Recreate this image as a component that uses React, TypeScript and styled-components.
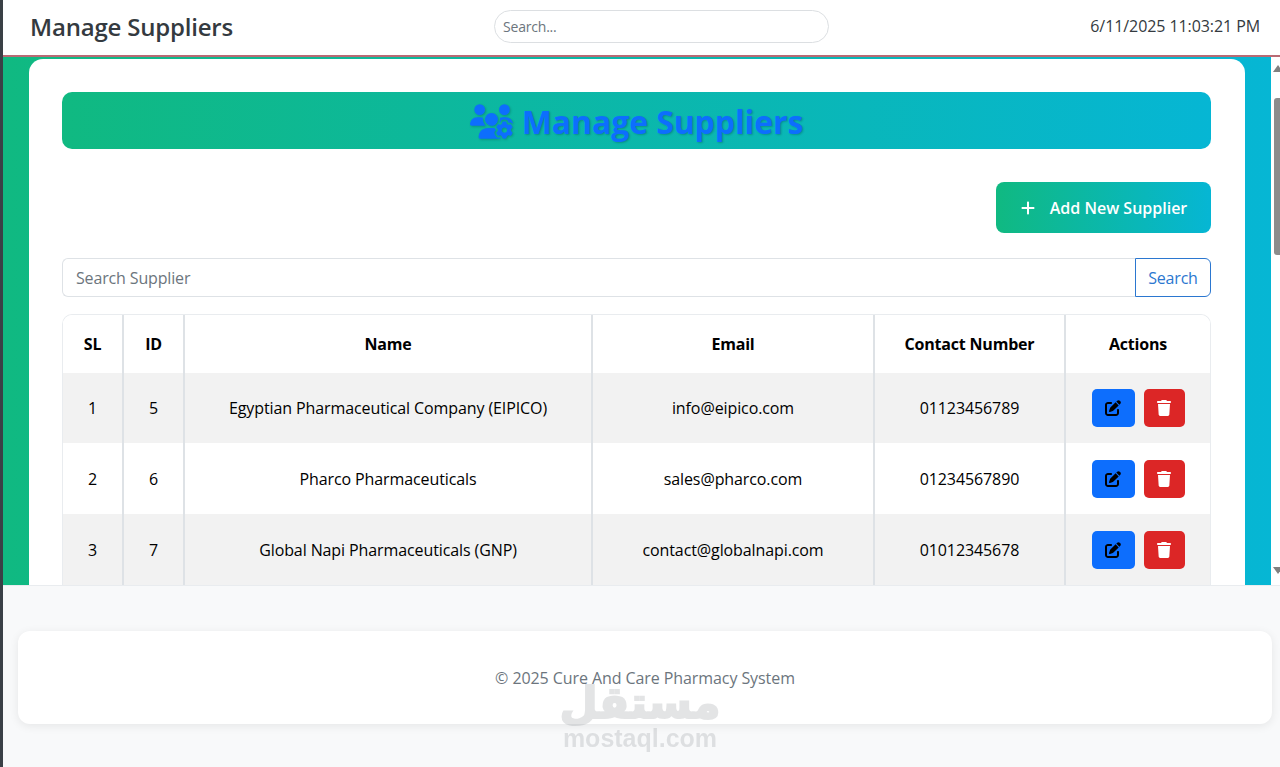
import styled, { createGlobalStyle } from "styled-components";
import { FaPenToSquare, FaPlus, FaTrash, FaUsersGear } from "react-icons/fa6";

const GlobalStyle = createGlobalStyle`
    * {
        box-sizing: border-box;
    }
    html, body {
        margin: 0;
        height: 767px;
        overflow: hidden;
        background: #f8f9fa;
        font-family: "Open Sans", "Noto Sans", "Liberation Sans", sans-serif;
        color: #000;
    }
`;

const Page = styled.div`
    position: relative;
    height: 767px;
    display: flex;
    flex-direction: column;
    border-left: 3px solid #3a4046;
`;

const Head = styled.header`
    height: 57px;
    flex: none;
    display: grid;
    grid-template-columns: 464px 335px 1fr;
    align-items: center;
    padding: 0 20px 3px 27px;
    background: #fff;
    border-bottom: 2px solid #b86a74;
`;

const HeadTitle = styled.h1`
    margin: 0;
    font-size: 24px;
    font-weight: 600;
    letter-spacing: -0.2px;
    color: #343a40;
`;

const HeadSearch = styled.input`
    width: 335px;
    height: 33px;
    padding: 0 8px;
    border: 1px solid #dcdfe2;
    border-radius: 17px;
    font: inherit;
    font-size: 14px;
    letter-spacing: -0.2px;
    outline: none;
    &::placeholder {
        color: #6c757d;
    }
`;

const Clock = styled.div`
    justify-self: end;
    font-size: 16px;
    letter-spacing: -0.08px;
    color: #343a40;
`;

const Body = styled.div`
    height: 528px;
    flex: none;
    display: flex;
`;

const Main = styled.main`
    flex: 1;
    min-width: 0;
    overflow: hidden;
    padding: 2px 26px 0;
    background: linear-gradient(90deg, #10b981, #06b6d4);
`;

const Card = styled.section`
    height: 600px;
    padding: 33px 34px 0 33px;
    background: #fff;
    border-radius: 14px;
`;

const Banner = styled.div`
    height: 57px;
    display: flex;
    align-items: center;
    justify-content: center;
    gap: 9px;
    padding-top: 1px;
    border-radius: 10px;
    background: linear-gradient(90deg, #10b981, #06b6d4);
    color: #0d6efd;
    font-size: 32px;
    font-weight: 700;
    letter-spacing: -0.1px;
    text-shadow: 1px 1px 2px rgba(0, 0, 0, 0.2);
    svg {
        filter: drop-shadow(1px 1px 1px rgba(0, 0, 0, 0.2));
    }
`;

const ActionRow = styled.div`
    display: flex;
    justify-content: flex-end;
    margin: 33px 0 25px;
`;

const AddButton = styled.button`
    width: 215px;
    height: 51px;
    display: flex;
    align-items: center;
    justify-content: center;
    gap: 14px;
    border: 0;
    border-radius: 8px;
    background: linear-gradient(90deg, #10b981, #06b6d4);
    color: #fff;
    font: inherit;
    font-size: 16px;
    font-weight: 600;
`;

const SearchGroup = styled.div`
    display: flex;
    height: 39px;
    margin-bottom: 17px;
`;

const SearchInput = styled.input`
    flex: 1;
    min-width: 0;
    padding: 0 13px;
    border: 1px solid #dee2e6;
    border-right: 0;
    border-radius: 6px 0 0 6px;
    font: inherit;
    font-size: 16px;
    letter-spacing: -0.15px;
    outline: none;
    &::placeholder {
        color: #6c757d;
    }
`;

const SearchButton = styled.button`
    width: 76px;
    border: 1px solid #2b77d0;
    border-radius: 0 6px 6px 0;
    background: #fff;
    color: #2b77d0;
    font: inherit;
    font-size: 16px;
    letter-spacing: -0.2px;
`;

const TableWrap = styled.div`
    overflow: hidden;
    border-radius: 10px 10px 0 0;
    border: 1px solid #e9ecef;
    border-width: 1px 1px 0 1px;
`;

const Table = styled.table`
    width: 100%;
    table-layout: fixed;
    border-collapse: collapse;
    font-size: 16px;
    letter-spacing: -0.1px;
    text-align: center;
`;

const Th = styled.th`
    height: 58px;
    padding: 0;
    font-weight: 700;
    letter-spacing: -0.2px;
    background: #fff;
    border-right: 2px solid #dee2e6;
    &:last-child {
        border-right: 0;
    }
`;

const Row = styled.tr<{ $striped: boolean }>`
    height: 71px;
    background: ${props => (props.$striped ? "#f2f2f2" : "#fff")};
    &:first-child {
        height: 70px;
    }
`;

const Td = styled.td`
    padding: 0;
    border-right: 2px solid #dee2e6;
    &:last-child {
        border-right: 0;
    }
`;

const Actions = styled.div`
    display: flex;
    justify-content: center;
    gap: 9px;
`;

const IconButton = styled.button<{ $kind: "edit" | "del" }>`
    width: ${props => (props.$kind === "edit" ? "43px" : "41px")};
    height: 38px;
    display: flex;
    align-items: center;
    justify-content: center;
    padding: 0;
    border: 0;
    border-radius: 5px;
    font-size: 16px;
    background: ${props => (props.$kind === "edit" ? "#0d6efd" : "#dc2626")};
    color: ${props => (props.$kind === "edit" ? "#000" : "#fff")};
`;

const ScrollRail = styled.div`
    width: 9px;
    flex: none;
    overflow: hidden;
    display: flex;
    flex-direction: column;
    padding: 8px 0 0 2px;
    background: #fff;
`;

const Arrow = styled.div<{ $down?: boolean }>`
    width: 10px;
    height: 7px;
    flex: none;
    background: #808080;
    clip-path: ${props =>
        props.$down ? "polygon(0 0, 100% 0, 50% 100%)" : "polygon(50% 0, 100% 100%, 0 100%)"};
    margin-top: ${props => (props.$down ? "312px" : "0")};
`;

const Thumb = styled.div`
    width: 6px;
    height: 157px;
    flex: none;
    margin: 26px 0 0 1px;
    border-radius: 3px 0 0 3px;
    background: #8c8c8c;
`;

const FooterArea = styled.div`
    flex: 1;
    padding: 45px 8px 43px 15px;
    background: #f8f9fa;
    border-top: 1px solid #e9ecef;
`;

const FooterCard = styled.footer`
    height: 93px;
    display: flex;
    align-items: center;
    justify-content: center;
    border-radius: 12px;
    background: #fff;
    box-shadow: 0 2px 10px rgba(0, 0, 0, 0.08);
    font-size: 16px;
    letter-spacing: -0.08px;
    color: #6c757d;
`;

// 워터마크: 페이지 위에 겹쳐지는 로고
const Watermark = styled.div`
    position: absolute;
    left: 557px;
    top: 681px;
    width: 160px;
    display: flex;
    flex-direction: column;
    align-items: center;
    color: #777c82;
    opacity: 0.2;
    pointer-events: none;
`;

const WatermarkArabic = styled.div`
    height: 44px;
    font-family: "DejaVu Sans", sans-serif;
    font-size: 44px;
    font-weight: 700;
    line-height: 44px;
    -webkit-text-stroke: 2px #777c82;
`;

const WatermarkLatin = styled.div`
    font-family: "Liberation Sans", sans-serif;
    font-size: 25px;
    font-weight: 700;
    line-height: 26px;
`;

const columns = [60, 61, 408, 282, 191, 145];
const headers = ["SL", "ID", "Name", "Email", "Contact Number", "Actions"];
const suppliers = [
    { sl: 1, id: 5, name: "Egyptian Pharmaceutical Company (EIPICO)", email: "info@eipico.com", phone: "01123456789" },
    { sl: 2, id: 6, name: "Pharco Pharmaceuticals", email: "sales@pharco.com", phone: "01234567890" },
    { sl: 3, id: 7, name: "Global Napi Pharmaceuticals (GNP)", email: "contact@globalnapi.com", phone: "01012345678" },
];

function App() {
    return (
        <>
            <GlobalStyle />
            <Page>
                <Head>
                    <HeadTitle>Manage Suppliers</HeadTitle>
                    <HeadSearch placeholder="Search..." />
                    <Clock>6/11/2025 11:03:21 PM</Clock>
                </Head>
                <Body>
                    <Main>
                        <Card>
                            <Banner>
                                <FaUsersGear size={43} />
                                Manage Suppliers
                            </Banner>
                            <ActionRow>
                                <AddButton>
                                    <FaPlus size={16} />
                                    Add New Supplier
                                </AddButton>
                            </ActionRow>
                            <SearchGroup>
                                <SearchInput placeholder="Search Supplier" />
                                <SearchButton>Search</SearchButton>
                            </SearchGroup>
                            <TableWrap>
                                <Table>
                                    <colgroup>
                                        {columns.map((width, index) => (
                                            <col key={index} style={{ width }} />
                                        ))}
                                    </colgroup>
                                    <thead>
                                        <tr>
                                            {headers.map(header => (
                                                <Th key={header}>{header}</Th>
                                            ))}
                                        </tr>
                                    </thead>
                                    <tbody>
                                        {suppliers.map((item, index) => (
                                            <Row key={item.id} $striped={index % 2 === 0}>
                                                <Td>{item.sl}</Td>
                                                <Td>{item.id}</Td>
                                                <Td>{item.name}</Td>
                                                <Td>{item.email}</Td>
                                                <Td>{item.phone}</Td>
                                                <Td>
                                                    <Actions>
                                                        <IconButton $kind="edit">
                                                            <FaPenToSquare />
                                                        </IconButton>
                                                        <IconButton $kind="del">
                                                            <FaTrash />
                                                        </IconButton>
                                                    </Actions>
                                                </Td>
                                            </Row>
                                        ))}
                                    </tbody>
                                </Table>
                            </TableWrap>
                        </Card>
                    </Main>
                    <ScrollRail>
                        <Arrow />
                        <Thumb />
                        <Arrow $down />
                    </ScrollRail>
                </Body>
                <FooterArea>
                    <FooterCard>© 2025 Cure And Care Pharmacy System</FooterCard>
                </FooterArea>
                <Watermark>
                    <WatermarkArabic>مستقل</WatermarkArabic>
                    <WatermarkLatin>mostaql.com</WatermarkLatin>
                </Watermark>
            </Page>
        </>
    );
}

export default App;
